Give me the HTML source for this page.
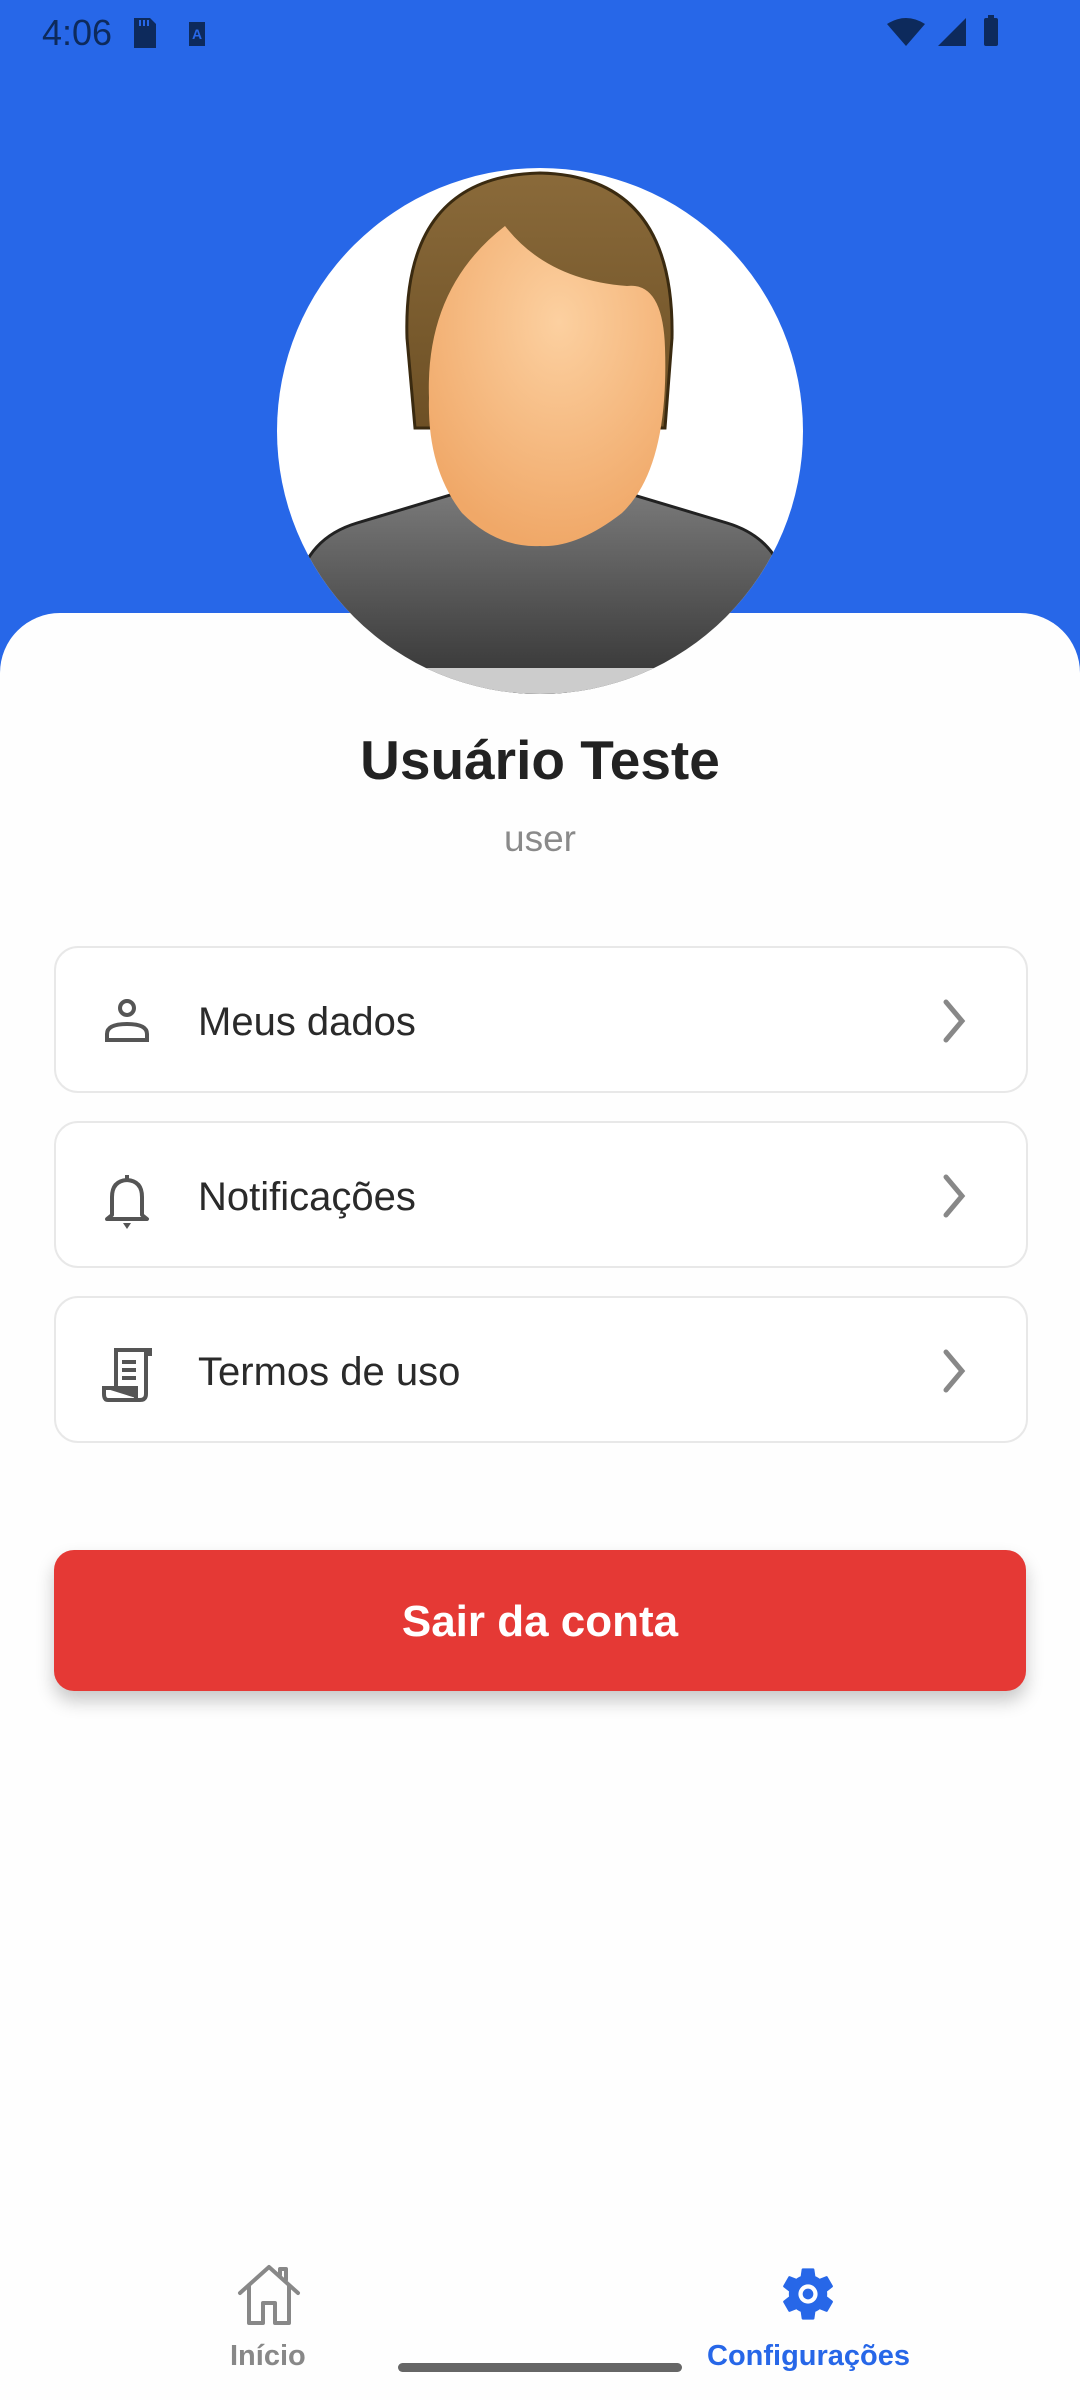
<!DOCTYPE html>
<html><head><meta charset="utf-8">
<style>
html,body{margin:0;padding:0;}
body{width:1080px;height:2400px;position:relative;overflow:hidden;background:#fff;font-family:"Liberation Sans",Arial,sans-serif;}
.blue{position:absolute;left:0;top:0;width:1080px;height:680px;background:#2767e8;}
.sheet{position:absolute;left:0;top:613px;width:1080px;height:1787px;background:#fefefe;border-radius:60px 60px 0 0;}
.status{position:absolute;top:12px;left:42px;font-size:36px;color:#0d2a5c;}
.avatar{position:absolute;left:277px;top:168px;width:526px;height:526px;}
.name{position:absolute;top:728px;width:1080px;text-align:center;font-size:55px;font-weight:bold;color:#222;}
.user{position:absolute;top:818px;width:1080px;text-align:center;font-size:37px;color:#8a8a8a;}
.card{position:absolute;left:54px;width:970px;height:143px;border:2px solid #e8e8e8;border-radius:24px;background:#fff;}
.card .t{position:absolute;left:142px;top:52px;font-size:40px;color:#2a2a2a;}
.card svg.ic{position:absolute;left:46px;top:48px;}
.card svg.ch{position:absolute;left:884px;top:50px;}
.btn{position:absolute;left:54px;top:1550px;width:972px;height:141px;background:#e53935;border-radius:20px;box-shadow:0 10px 18px rgba(0,0,0,0.22);color:#fff;font-weight:bold;font-size:44px;text-align:center;line-height:143px;}
.nav{position:absolute;font-weight:bold;font-size:29px;}
.bar{position:absolute;left:398px;top:2363px;width:284px;height:9px;border-radius:5px;background:#666;}
</style></head><body>
<div class="blue"></div>
<div class="sheet"></div>
<div class="status">4:06</div>
<svg style="position:absolute;left:130px;top:12px" width="80" height="40" viewBox="0 0 80 40">
<path d="M4 6h16l6 6v24H4z" fill="#0d2a5c"/><rect x="9" y="8" width="2" height="6" fill="#2767e8"/><rect x="13" y="8" width="2" height="6" fill="#2767e8"/><rect x="17" y="8" width="2" height="6" fill="#2767e8"/>
<rect x="59" y="10" width="16" height="24" fill="#0d2a5c"/><text x="62" y="27" font-size="14" font-weight="bold" fill="#2767e8" font-family="Liberation Sans">A</text>
</svg>
<svg style="position:absolute;left:880px;top:10px" width="140" height="40" viewBox="0 0 140 40">
<path d="M7 14 Q26 2 45 14 L26 36z" fill="#0d2a5c"/>
<path d="M58 36 L86 8 V36z" fill="#0d2a5c"/>
<rect x="104" y="8" width="14" height="28" rx="2" fill="#0d2a5c"/><rect x="108" y="5" width="6" height="4" fill="#0d2a5c"/>
</svg>
<svg class="avatar" viewBox="0 0 526 526">
<defs>
<clipPath id="c"><circle cx="263" cy="263" r="263"/></clipPath>
<linearGradient id="hair" x1="0" y1="0" x2="0" y2="1"><stop offset="0" stop-color="#8a6a3a"/><stop offset="1" stop-color="#6d5025"/></linearGradient>
<radialGradient id="face" cx="0.55" cy="0.3" r="0.7"><stop offset="0" stop-color="#fcd0a0"/><stop offset="1" stop-color="#f0a868"/></radialGradient>
<linearGradient id="shirt" x1="0" y1="0" x2="0" y2="1"><stop offset="0" stop-color="#7a7a7a"/><stop offset="1" stop-color="#333"/></linearGradient>
</defs>
<circle cx="263" cy="263" r="263" fill="#fff"/>
<g clip-path="url(#c)">
<path d="M20 420 Q30 370 80 355 L190 322 L340 322 L450 355 Q500 370 510 420 L510 526 L20 526z" fill="url(#shirt)" stroke="#222" stroke-width="3"/>
<rect x="60" y="500" width="400" height="30" fill="#ccc"/>
<path d="M185 260 L188 335 Q263 400 345 335 L343 260z" fill="#eaa870"/>
<path d="M130 170 Q125 8 263 5 Q398 8 395 170 L388 260 L138 260z" fill="url(#hair)" stroke="#3a2a10" stroke-width="3"/>
<path d="M152 230 Q148 120 228 58 Q270 112 350 118 Q386 114 388 180 Q392 300 345 345 Q300 380 263 378 Q220 380 185 345 Q150 300 152 230z" fill="url(#face)"/>
</g>
</svg>
<div class="name">Usuário Teste</div>
<div class="user">user</div>

<div class="card" style="top:946px">
<svg class="ic" width="50" height="50" viewBox="0 0 50 50"><circle cx="25" cy="12" r="7" fill="none" stroke="#555" stroke-width="4"/><path d="M5 44 V38 Q5 28 25 28 Q45 28 45 38 V44z" fill="none" stroke="#555" stroke-width="4"/></svg>
<div class="t">Meus dados</div>
<svg class="ch" width="30" height="46" viewBox="0 0 30 46"><path d="M6 4 L22 23 L6 42" fill="none" stroke="#888" stroke-width="5" stroke-linecap="round"/></svg>
</div>
<div class="card" style="top:1121px">
<svg class="ic" width="50" height="60" viewBox="0 0 50 60"><path d="M25 4 V8 M10 44 V26 Q10 10 25 9 Q40 10 40 26 V44 L45 48 H5 L10 44z" fill="none" stroke="#555" stroke-width="4" stroke-linejoin="round"/><path d="M21 52 H29 L25 58z" fill="#555"/></svg>
<div class="t">Notificações</div>
<svg class="ch" width="30" height="46" viewBox="0 0 30 46"><path d="M6 4 L22 23 L6 42" fill="none" stroke="#888" stroke-width="5" stroke-linecap="round"/></svg>
</div>
<div class="card" style="top:1296px">
<svg class="ic" width="54" height="56" viewBox="0 0 54 56"><path d="M14 4 H48 V8 H44 V48 Q44 54 38 54 H6 Q2 54 2 48 V42 H14z" fill="none" stroke="#555" stroke-width="4"/><path d="M2 42 H34 V52" fill="#555" stroke="#555" stroke-width="4"/><rect x="20" y="14" width="14" height="4" fill="#555"/><rect x="20" y="22" width="14" height="4" fill="#555"/><rect x="20" y="30" width="14" height="4" fill="#555"/></svg>
<div class="t">Termos de uso</div>
<svg class="ch" width="30" height="46" viewBox="0 0 30 46"><path d="M6 4 L22 23 L6 42" fill="none" stroke="#888" stroke-width="5" stroke-linecap="round"/></svg>
</div>

<div class="btn">Sair da conta</div>

<svg style="position:absolute;left:236px;top:2263px" width="66" height="64" viewBox="0 0 66 64"><path d="M4 30 L33 4 L62 30 M13 22 V60 H27 V40 H39 V60 H53 V22 M44 12 V6 H50 V17" fill="none" stroke="#888" stroke-width="4" stroke-linejoin="round" stroke-linecap="round"/></svg>
<div class="nav" style="left:230px;top:2340px;color:#888">Início</div>
<svg style="position:absolute;left:776px;top:2262px" width="64" height="64" viewBox="0 0 24 24"><path fill="#2767e8" d="M19.14 12.94c.04-.3.06-.61.06-.94 0-.32-.02-.64-.07-.94l2.03-1.58a.49.49 0 0 0 .12-.61l-1.92-3.32a.49.49 0 0 0-.59-.22l-2.39.96c-.5-.38-1.030-.7-1.62-.94l-.36-2.54a.48.48 0 0 0-.48-.41h-3.84c-.24 0-.43.17-.47.41l-.36 2.540c-.59.24-1.13.57-1.62.94l-2.39-.96a.48.48 0 0 0-.59.22L2.74 8.87c-.12.21-.08.47.12.61l2.03 1.58c-.05.3-.07.62-.07.94s.02.64.07.94l-2.03 1.58a.49.49 0 0 0-.12.61l1.92 3.32c.12.22.37.29.59.22l2.39-.96c.5.38 1.03.7 1.62.94l.36 2.54c.05.24.24.41.48.41h3.84c.24 0 .44-.17.47-.41l.36-2.54c.59-.24 1.13-.56 1.62-.94l2.39.96c.22.08.47 0 .59-.22l1.92-3.32c.12-.22.07-.47-.12-.61l-2.01-1.58zM12 15.6A3.6 3.6 0 1 1 12 8.4a3.6 3.6 0 0 1 0 7.2z"/><circle cx="12" cy="12" r="2" fill="#2767e8"/></svg>
<div class="nav" style="left:707px;top:2340px;color:#2767e8">Configurações</div>
<div class="bar"></div>
</body></html>
